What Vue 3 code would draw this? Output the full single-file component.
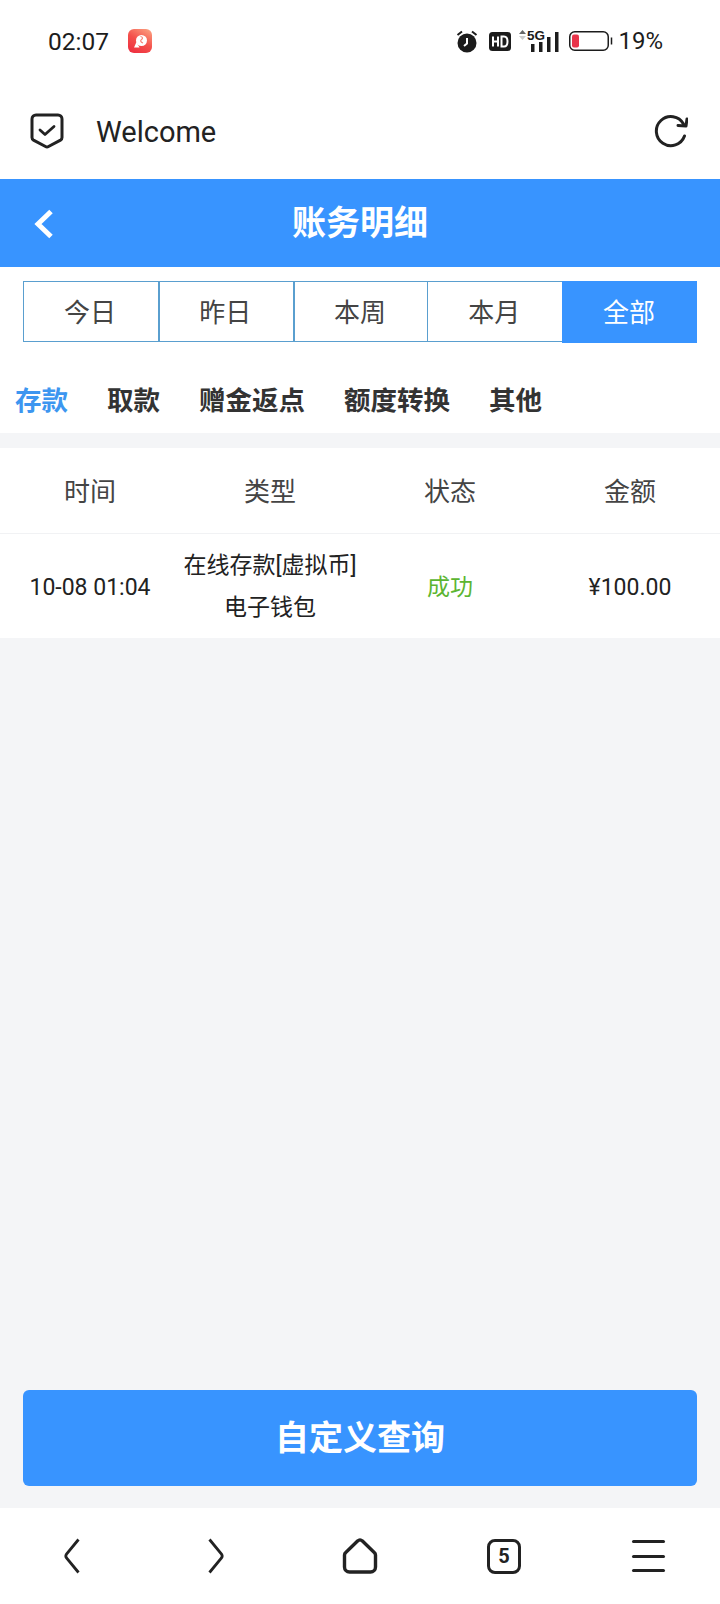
<template>
  <div class="page">
    <div class="status-bar">
      <span class="status-time">02:07</span>
      <svg class="app-badge" width="24" height="24" viewBox="0 0 24 24">
        <defs>
          <linearGradient id="badge" x1="0.8" y1="0" x2="0.2" y2="1">
            <stop offset="0" stop-color="#fb9a7c" />
            <stop offset="0.5" stop-color="#f4514c" />
            <stop offset="1" stop-color="#ee2f40" />
          </linearGradient>
        </defs>
        <rect width="24" height="24" rx="6" fill="url(#badge)" />
        <circle cx="13.500" cy="11.500" r="5.500" fill="#fff" />
        <path d="M12.500 7.500c2.500.5 2.500 2 1 3s-1 2.500 1.500 3.500" fill="none" stroke="#f7857a" stroke-width="1.200" />
        <path d="M6 18.500l2.500-5.500 3 5.500z" fill="#fff" />
      </svg>
      <div class="status-right">
        <svg width="22" height="23" viewBox="0 0 22 23">
          <circle cx="11" cy="13" r="9.500" fill="#1c1c1c" />
          <path d="M11 8v5.500l-3 2.500" fill="none" stroke="#fff" stroke-width="2" />
          <path d="M1.500 5L6 1.500M20.500 5L16 1.500" stroke="#1c1c1c" stroke-width="2" />
        </svg>
        <svg class="hd" width="22" height="19" viewBox="0 0 22 19">
          <rect width="22" height="19" rx="3.500" fill="#1c1c1c" />
          <path d="M4 4.500v10M9 4.500v10M4 9.500h5" fill="none" stroke="#fff" stroke-width="2" />
          <path d="M12.500 4.500v10h2.500c2.500 0 3.500-2 3.500-5s-1-5-3.500-5z" fill="none" stroke="#fff" stroke-width="2" />
        </svg>
        <svg class="signal" width="40" height="25" viewBox="0 -3 40 25">
          <path d="M0 4l3.500-4 3.500 4z" fill="#666" />
          <path d="M0 6l3.500 4 3.500-4z" fill="#ccc" />
          <rect x="12" y="14" width="3.500" height="8" fill="#1c1c1c" />
          <rect x="20" y="12" width="3.500" height="10" fill="#1c1c1c" />
          <rect x="28" y="7" width="3.500" height="15" fill="#1c1c1c" />
          <rect x="36" y="2" width="3.500" height="20" fill="#1c1c1c" />
          <text x="8" y="10" class="signal-text">5G</text>
        </svg>
        <svg class="battery" width="44" height="20" viewBox="0 0 44 20">
          <rect x="0.750" y="0.750" width="38.500" height="18.500" rx="5" fill="#fff" stroke="#1c1c1c" stroke-width="1.500" />
          <rect x="3" y="3.500" width="7" height="13" rx="2" fill="#e8344a" />
          <path d="M42.500 6.500v7" stroke="#1c1c1c" stroke-width="1.500" />
        </svg>
        <span class="status-pct">19%</span>
      </div>
    </div>

    <div class="browser-bar">
      <svg width="34" height="36" viewBox="0 0 34 36">
        <path d="M6 2h22a4 4 0 0 1 4 4v18.500a3 3 0 0 1-1.500 2.600L18.500 33.500a3 3 0 0 1-3 0L3.500 27.100A3 3 0 0 1 2 24.500V6a4 4 0 0 1 4-4z" fill="none" stroke="#222" stroke-width="3" />
        <path d="M10 17l5 4.500 9-8" fill="none" stroke="#222" stroke-width="2.800" stroke-linecap="round" stroke-linejoin="round" />
      </svg>
      <span class="welcome">Welcome</span>
      <svg class="reload" width="34" height="34" viewBox="0 0 34 34">
        <path d="M30.500 22A14.500 14.500 0 1 1 29.500 10" fill="none" stroke="#222" stroke-width="3" stroke-linecap="round" />
        <path d="M24 11.500L32 12 33 5" fill="none" stroke="#222" stroke-width="3" stroke-linejoin="round" stroke-linecap="round" />
      </svg>
    </div>

    <header class="title-bar">
      <svg class="title-back" width="20" height="30" viewBox="0 0 20 30">
        <path d="M17 2.500L4 15l13 12.500" fill="none" stroke="#fff" stroke-width="5" />
      </svg>
      <h1>账务明细</h1>
    </header>

    <div class="top">
      <div class="segments">
        <div
          v-for="s in ranges"
          :key="s"
          class="segment"
          :class="{ 'segment--on': s === '全部' }"
        >{{ s }}</div>
      </div>

      <div class="tabs">
        <span
          v-for="t in tabs"
          :key="t"
          class="tab"
          :class="{ 'tab--on': t === '存款' }"
        >{{ t }}</span>
      </div>
    </div>

    <main class="content">
      <div class="table">
        <div class="table-head">
          <div v-for="h in heads" :key="h">{{ h }}</div>
        </div>
        <div class="table-row">
          <div>10-08 01:04</div>
          <div class="cell-type">
            <div>在线存款[虚拟币]</div>
            <div>电子钱包</div>
          </div>
          <div class="cell-ok">成功</div>
          <div>¥100.00</div>
        </div>
      </div>

      <button class="query-btn">自定义查询</button>
    </main>

    <nav class="bottom-nav">
      <div class="nav-item">
        <svg width="18" height="36" viewBox="0 0 18 36">
          <path d="M15.500 1.500L3.500 16a3.500 3.500 0 0 0 0 4l12 14.500" fill="none" stroke="#222" stroke-width="2.800" />
        </svg>
      </div>
      <div class="nav-item">
        <svg width="18" height="36" viewBox="0 0 18 36">
          <path d="M2.500 1.500L14.500 16a3.500 3.500 0 0 1 0 4l-12 14.500" fill="none" stroke="#222" stroke-width="2.800" />
        </svg>
      </div>
      <div class="nav-item">
        <svg width="36" height="36" viewBox="0 0 36 36">
          <path d="M15.800 2.800a3 3 0 0 1 4.400 0l12 11.700a3 3 0 0 1 1.300 2.500v12a5 5 0 0 1-5 5H7.500a5 5 0 0 1-5-5V17a3 3 0 0 1 1.300-2.500z" fill="none" stroke="#222" stroke-width="3.400" />
        </svg>
      </div>
      <div class="nav-item">
        <div class="tab-count">5</div>
      </div>
      <div class="nav-item">
        <div class="menu-icon"><i></i><i></i><i></i></div>
      </div>
    </nav>
  </div>
</template>

<script setup>
const ranges = ['今日', '昨日', '本周', '本月', '全部']
const tabs = ['存款', '取款', '赠金返点', '额度转换', '其他']
const heads = ['时间', '类型', '状态', '金额']
</script>

<style>
html,
body {
  margin: 0;
  background: #fff;
}
</style>

<style scoped>
.page {
  width: 720px;
  height: 1604px;
  display: flex;
  flex-direction: column;
  overflow: hidden;
  font-family: Roboto, "Noto Sans CJK SC", sans-serif;
  color: #333;
  background: #fff;
}

.status-bar {
  height: 82px;
  flex: none;
  display: flex;
  align-items: center;
  padding: 0 57px 0 48px;
  box-sizing: border-box;
  color: #1c1c1c;
}

.status-time {
  font-size: 24.500px;
  width: 80px;
}

.status-right {
  margin-left: auto;
  display: flex;
  align-items: center;
}

.hd {
  margin-left: 11px;
}

.signal {
  margin-left: 8px;
  margin-top: -3px;
}

.signal-text {
  font-family: "Liberation Sans", sans-serif;
  font-size: 13.500px;
  font-weight: 700;
  fill: #1c1c1c;
}

.battery {
  margin-left: 10px;
}

.status-pct {
  margin-left: 5px;
  font-size: 24px;
}

.browser-bar {
  height: 97px;
  flex: none;
  display: flex;
  align-items: center;
  padding: 0 32px 0 30px;
  box-sizing: border-box;
}

.welcome {
  margin-left: 32px;
  padding-top: 2px;
  font-size: 29px;
  color: #222;
}

.reload {
  margin-left: auto;
}

.title-bar {
  height: 88px;
  flex: none;
  display: flex;
  align-items: center;
  justify-content: center;
  position: relative;
  background: #3894ff;
}

.title-back {
  position: absolute;
  left: 34px;
  top: 30px;
}

.title-bar h1 {
  margin: 0 0 5px;
  font-size: 34px;
  font-weight: 700;
  color: #fff;
}

.top {
  flex: none;
  height: 166px;
  padding-top: 14px;
  box-sizing: border-box;
}

.segments {
  display: grid;
  grid-template-columns: repeat(5, 1fr);
  height: 61px;
  margin: 0 23px;
}

.segment {
  display: flex;
  align-items: center;
  justify-content: center;
  box-sizing: border-box;
  border: 1px solid #5a9fcf;
  border-right: 0;
  padding: 0 2px 3px 0;
  font-size: 26px;
  color: #444;
}

.segment:nth-child(2),
.segment:nth-child(3) {
  border-left-width: 2px;
}

.segment--on {
  margin-bottom: -1px;
  background: #3894ff;
  border-color: #3894ff;
  color: #fff;
}

.tabs {
  display: flex;
  gap: 39px;
  padding: 35px 0 0 15px;
}

.tab {
  font-size: 26.500px;
  font-weight: 700;
  line-height: 48px;
  color: #333;
}

.tab--on {
  color: #3c96f0;
}

.content {
  flex: 1;
  display: flex;
  flex-direction: column;
  background: #f4f5f7;
  padding-top: 15px;
}

.table {
  background: #fff;
}

.table-head,
.table-row {
  display: grid;
  grid-template-columns: repeat(4, 180px);
  align-items: center;
  text-align: center;
}

.table-head {
  height: 82px;
  padding-bottom: 3px;
  border-bottom: 1px solid #f1f2f4;
  font-size: 26px;
  color: #444;
}

.table-row {
  height: 104px;
  box-sizing: border-box;
  padding-top: 2px;
  font-size: 23px;
  color: #222;
}

.cell-type {
  font-size: 23px;
  line-height: 42px;
}

.cell-ok {
  font-size: 23px;
  padding-bottom: 4px;
  color: #5cb531;
}

.query-btn {
  display: block;
  margin: auto 23px 22px;
  height: 96px;
  padding: 0 0 6px;
  border: 0;
  border-radius: 6px;
  background: #3894ff;
  color: #fff;
  font-family: inherit;
  font-size: 34px;
  font-weight: 700;
}

.bottom-nav {
  height: 96px;
  flex: none;
  display: grid;
  grid-template-columns: repeat(5, 144px);
  background: #fff;
}

.nav-item {
  display: flex;
  align-items: center;
  justify-content: center;
}

.tab-count {
  width: 34px;
  height: 35px;
  box-sizing: border-box;
  border: 3px solid #222;
  border-radius: 8px;
  display: flex;
  align-items: center;
  justify-content: center;
  font-size: 20px;
  font-weight: 700;
  color: #222;
}

.menu-icon {
  width: 33px;
  height: 32px;
  display: flex;
  flex-direction: column;
  justify-content: space-between;
}

.menu-icon i {
  display: block;
  height: 3px;
  border-radius: 2px;
  background: #222;
}
</style>
